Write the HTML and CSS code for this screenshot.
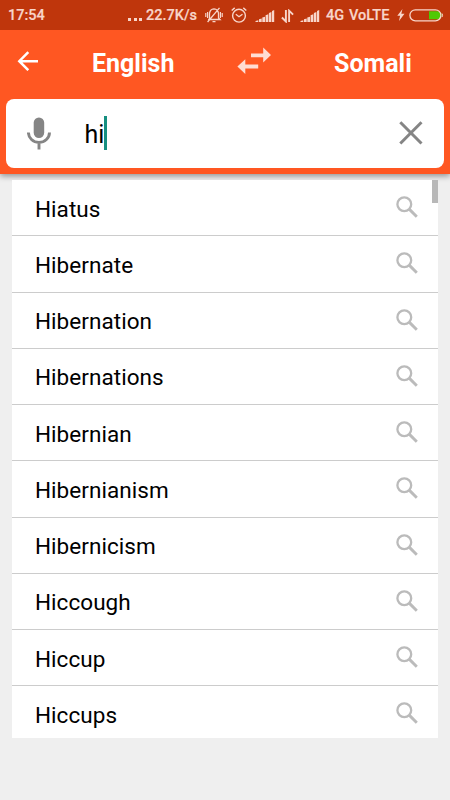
FILE: index.html
```
<!DOCTYPE html>
<html lang="en">
<head>
<meta charset="utf-8">
<title>English – Somali</title>
<link rel="stylesheet" href="styles.css">
</head>
<body>
<svg class="defs" width="0" height="0">
  <symbol id="search" viewBox="0 0 22 22"><circle cx="8.300" cy="8.200" r="6.900" fill="none" stroke="currentColor" stroke-width="2.300"/><path d="M13.200 13.100 20.800 20.700" stroke="currentColor" stroke-width="2.900"/></symbol>
  <symbol id="signal" viewBox="0 0 20 14"><path d="M.5 13v-1l2.800-.8V13zM4 13v-2.700l2.700-.8V13zM7.300 13V8.500l2.700-.8V13zM10.600 13V6.300l2.700-1V13zM13.900 13V4l2.500-1v10zM17 13V2l2.200-1v12z" fill="currentColor"/></symbol>
</svg>
<header class="header">
  <div class="status">
    <span class="clock">17:54</span>
    <span class="dots"><i></i><i></i><i></i></span>
    <span class="speed">22.7K/s</span>
    <svg class="mute" width="18" height="16" viewBox="0 0 18 16" fill="none" stroke="currentColor"><path d="M4.500 12V6.500Q5 2 9 1.800 13 2 13.500 6.500V11L15 12.500H3.200zM7.500 14.700h3M2.600 15 14.500.8" stroke-width="1.300"/><path d="M.8 6v4M2.600 5v6M15.400 5v6M17.200 6v4" stroke-width="1.200"/></svg>
    <svg class="alarm" width="16" height="16" viewBox="0 0 16 16" fill="none" stroke="currentColor" stroke-width="1.400"><circle cx="8" cy="8.700" r="6.400"/><path d="M.7 3.500 3.700.9M12.300.9l3 2.600M4.800 7.300 8 9.700l3.500-2.500"/></svg>
    <svg class="signal" width="20" height="14"><use href="#signal"/></svg>
    <svg class="data" width="13" height="14" viewBox="0 0 13 14" fill="none" stroke="currentColor" stroke-width="1.900"><path d="M4.900 1v11.500L.9 8.500M8.100 13V1.700l4 4"/></svg>
    <svg class="signal" width="20" height="14"><use href="#signal"/></svg>
    <span class="net">4G</span>
    <span class="volte">VoLTE</span>
    <svg class="bolt" width="8" height="12" viewBox="0 0 8 12"><path d="M5.500 0 .3 6.800h2.800L2 12l5.500-7.200H4.300z" fill="currentColor"/></svg>
    <svg class="battery" width="35" height="13" viewBox="0 0 35 13"><path d="M20 2.200h8.500a4 4 0 0 1 0 8.100H20z" fill="#4fc904"/><rect x=".9" y=".8" width="31" height="11" rx="5.500" fill="none" stroke="currentColor" stroke-width="1.300"/><path d="M33 4.500q1.200 1.800 0 3.600" fill="none" stroke="currentColor"/></svg>
  </div>
  <div class="languages">
    <svg class="back" width="22" height="20" viewBox="0 0 22 20" fill="none" stroke="#fff" stroke-width="2.500"><path d="M21 10.200H2.500M11.300 1.200 2.300 10.200l9 9"/></svg>
    <span class="lang from">English</span>
    <svg class="swap" width="35" height="28" viewBox="0 0 35 28"><path d="M14 6.400h12.200V.5L34 8l-7.800 7.500v-5.300H14zM21.200 17.500H8.300V12.300L.4 19.500l7.900 7.500v-5.500h12.900z" fill="#ffddd3"/></svg>
    <span class="lang to">Somali</span>
  </div>
  <div class="search">
    <svg class="mic" width="24" height="33" viewBox="0 0 24 33"><rect x="6.700" y=".5" width="10.500" height="20.500" rx="5.200" fill="#858585"/><path d="M1.400 15.500a10.550 9.900 0 0 0 21.100 0M12 25.300v7.200" fill="none" stroke="#858585" stroke-width="2.900"/></svg>
    <span class="query">hi</span><span class="caret"></span>
    <svg class="clear" width="24" height="24" viewBox="0 0 24 24"><path d="M1.300 1.300 22.500 22.500M22.500 1.300 1.300 22.500" stroke="#858585" stroke-width="3"/></svg>
  </div>
</header>
<main class="results">
  <div class="row"><span>Hiatus</span><svg><use href="#search"/></svg></div>
  <div class="row"><span>Hibernate</span><svg><use href="#search"/></svg></div>
  <div class="row"><span>Hibernation</span><svg><use href="#search"/></svg></div>
  <div class="row"><span>Hibernations</span><svg><use href="#search"/></svg></div>
  <div class="row"><span>Hibernian</span><svg><use href="#search"/></svg></div>
  <div class="row"><span>Hibernianism</span><svg><use href="#search"/></svg></div>
  <div class="row"><span>Hibernicism</span><svg><use href="#search"/></svg></div>
  <div class="row"><span>Hiccough</span><svg><use href="#search"/></svg></div>
  <div class="row"><span>Hiccup</span><svg><use href="#search"/></svg></div>
  <div class="row"><span>Hiccups</span><svg><use href="#search"/></svg></div>
  <div class="scrollbar"></div>
</main>
</body>
</html>
```
FILE: styles.css
```
* { box-sizing: border-box; }
body {
  margin: 0;
  height: 800px;
  overflow: hidden;
  background: #efefef;
  font-family: Roboto, sans-serif;
  color: #000;
}
svg { display: block; flex: none; }
.defs { position: absolute; }
.header {
  position: relative;
  height: 173.500px;
  background: #ff5722;
  box-shadow: 0 2px 6px rgba(0, 0, 0, .4);
}
.status {
  height: 30px;
  padding-left: 8px;
  display: flex;
  align-items: center;
  background: #bf360c;
  color: #f8d5ca;
  font-size: 14.500px;
  font-weight: 500;
  line-height: 30px;
  white-space: nowrap;
}
.clock, .speed, .net, .volte { padding-top: 2px; -webkit-text-stroke: .2px currentColor; }
.clock { width: 120px; }
.dots { width: 18px; display: flex; gap: 2.500px; padding-top: 8px; }
.dots i { width: 3px; height: 3px; background: currentColor; }
.speed { width: 59px; }
.mute { margin-right: 8px; }
.alarm { margin-right: 8px; }
.signal { margin: 2px 6px 0 0; }
.data { margin: 1px 6px 0 0; }
.net { width: 23px; }
.volte { width: 48px; }
.bolt { margin-right: 4px; }
.languages {
  height: 68.500px;
  padding-left: 17px;
  display: flex;
  align-items: center;
  color: #fff;
}
.back { margin-top: -6px; }
.lang { font-size: 25px; font-weight: 700; line-height: 30px; margin-top: -1px; }
.from { margin-left: 53px; width: 145px; }
.swap { margin-top: -6px; }
.to { margin-left: 62px; }
.search {
  height: 69px;
  margin: 0 6px;
  padding: 0 21px 0 20.500px;
  display: flex;
  align-items: center;
  background: #fff;
  border-radius: 8px;
}
.query { margin-left: 34px; padding-top: 3px; font-size: 25px; line-height: 34px; }
.caret { width: 2.300px; height: 34px; background: #168f80; }
.clear { margin-left: auto; }
.results {
  position: relative;
  margin: 6.500px 12.500px 0 12px;
  background: #fff;
}
.row {
  height: 56.250px;
  padding: 0 19.500px 0 23px;
  display: flex;
  align-items: center;
  justify-content: space-between;
  border-bottom: 1px solid #ccc;
  font-size: 22.500px;
  line-height: 28px;
}
.row span { padding-top: 2px; letter-spacing: .05px; }
.row:nth-child(10) { height: 51.500px; padding-top: 3.500px; border-bottom: 0; }
.row svg { width: 22px; height: 22px; margin-top: -1px; color: #bbb; }
.scrollbar {
  position: absolute;
  top: 0;
  right: 0;
  width: 5.500px;
  height: 22.500px;
  background: #b8b8b8;
}
```
